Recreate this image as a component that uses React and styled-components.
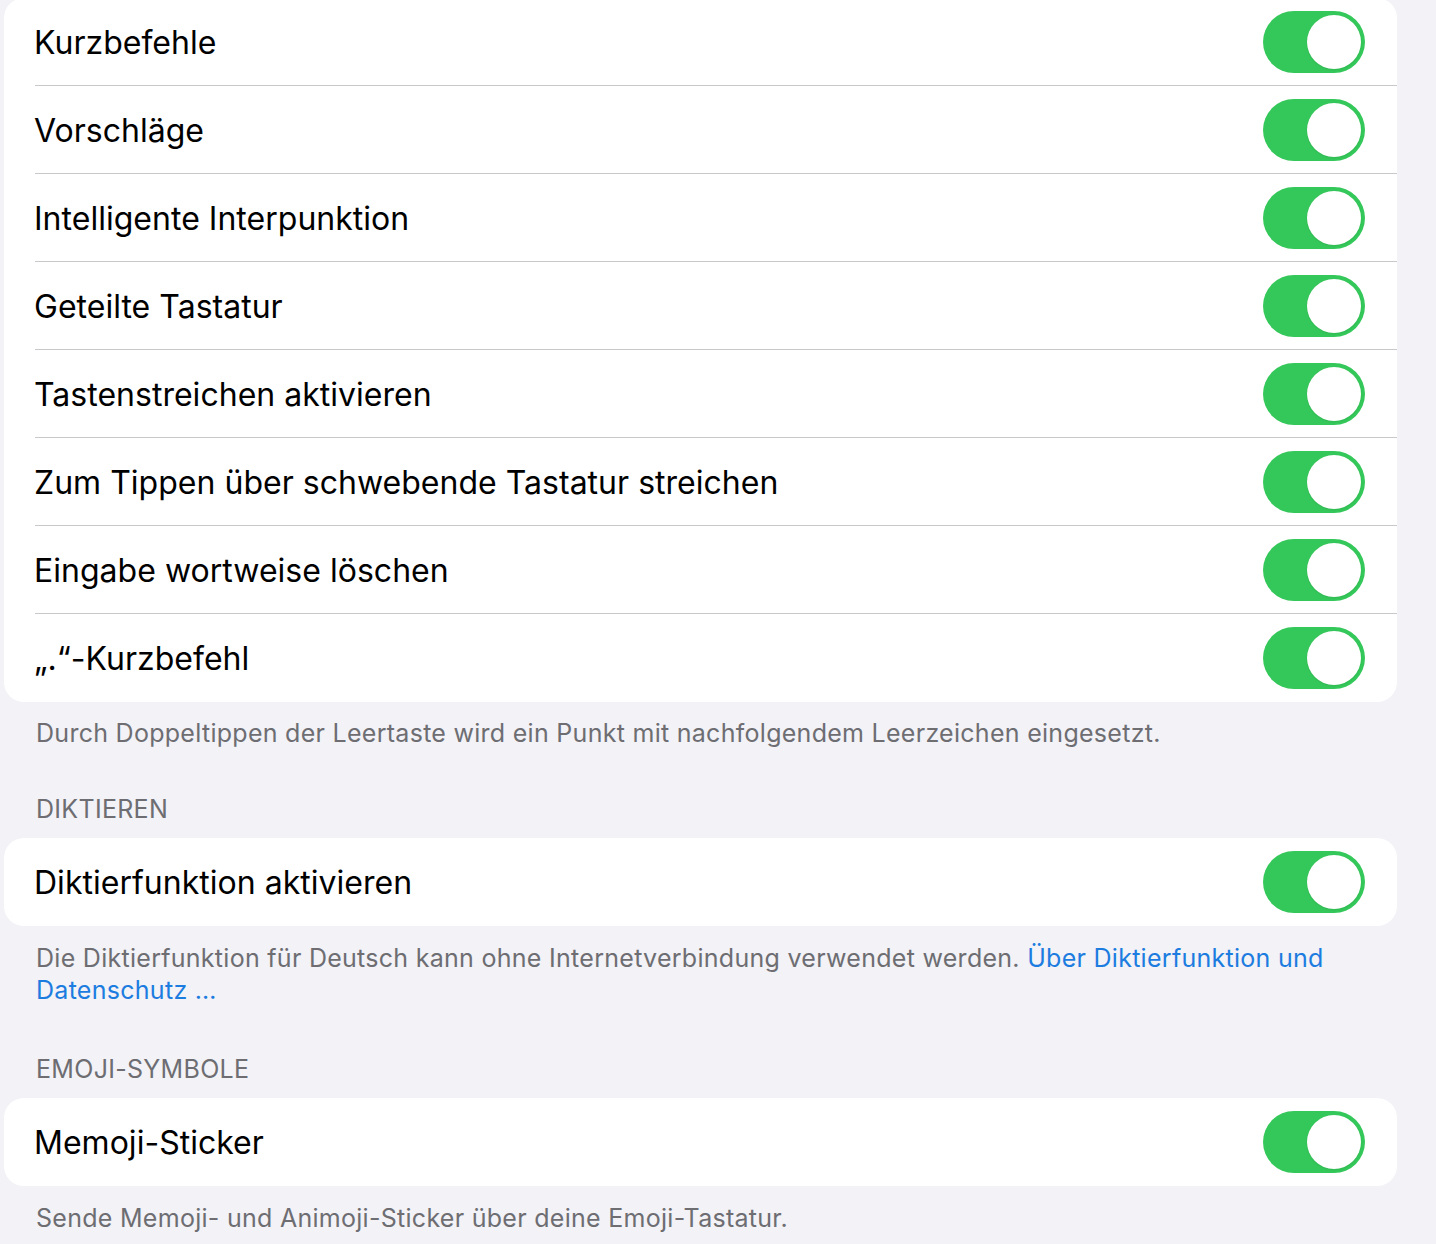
import React from 'react';
import styled, { createGlobalStyle } from 'styled-components';

const GlobalStyle = createGlobalStyle`
	html, body {
		margin: 0;
		padding: 0;
		background: #f2f2f7;
	}
	body {
		font-family: Inter, "Noto Sans", "Liberation Sans", sans-serif;
		-webkit-font-smoothing: antialiased;
	}
`

const Page = styled.div`
	width: 1436px;
	height: 1244px;
	overflow: hidden;
	padding: 0 39px 0 4px;
	box-sizing: border-box;
`

const Card = styled.div`
	background: #fff;
	border-radius: 20px;
	overflow: hidden;
	margin-top: ${props => props.offset || 0}px;
`

const Row = styled.div`
	display: flex;
	align-items: center;
	justify-content: space-between;
	height: 88px;
	padding: 0 32px 0 30px;
	position: relative;
	box-sizing: border-box;
	&:not(:last-child)::after {
		content: '';
		position: absolute;
		left: 31px;
		right: 0;
		bottom: 0;
		height: 1px;
		background: #c8c7cc;
	}
`

const Label = styled.span`
	font-size: 32px;
	color: #000;
	letter-spacing: 0.02px;
`

const Track = styled.div`
	width: 102px;
	height: 62px;
	border-radius: 31px;
	background: #34c759;
	display: flex;
	align-items: center;
	justify-content: flex-end;
	padding: 0 4px;
	box-sizing: border-box;
	flex-shrink: 0;
`

const Knob = styled.div`
	width: 54px;
	height: 54px;
	border-radius: 50%;
	background: #fff;
	box-shadow: 0 1px 2px rgba(0,0,0,0.08);
`

const Footer = styled.div`
	font-size: 25px;
	line-height: 32px;
	color: #6d6d72;
	padding: ${props => props.pad || '16px 32px 0 32px'};
	letter-spacing: 0.28px;
`

const Header = styled.div`
	font-size: 25px;
	line-height: 32px;
	color: #6d6d72;
	padding: 0 32px 13px 32px;
	letter-spacing: 0.3px;
`

const Link = styled.span`
	color: #1c7ce0;
`

const Toggle = () => (
	<Track>
		<Knob />
	</Track>
)

const topRows = [
	'Kurzbefehle',
	'Vorschläge',
	'Intelligente Interpunktion',
	'Geteilte Tastatur',
	'Tastenstreichen aktivieren',
	'Zum Tippen über schwebende Tastatur streichen',
	'Eingabe wortweise löschen',
	'„.“-Kurzbefehl',
]

export default function App() {
	return (
		<Page>
			<GlobalStyle />
			<Card offset={-2}>
				{topRows.map(label => (
					<Row key={label}>
						<Label>{label}</Label>
						<Toggle />
					</Row>
				))}
			</Card>
			<Footer pad="15px 32px 44px 32px">
				Durch Doppeltippen der Leertaste wird ein Punkt mit nachfolgendem Leerzeichen eingesetzt.
			</Footer>
			<Header>DIKTIEREN</Header>
			<Card>
				<Row>
					<Label>Diktierfunktion aktivieren</Label>
					<Toggle />
				</Row>
			</Card>
			<Footer pad="16px 32px 47px 32px">
				Die Diktierfunktion für Deutsch kann ohne Internetverbindung verwendet werden. <Link>Über Diktierfunktion und<br />Datenschutz …</Link>
			</Footer>
			<Header>EMOJI-SYMBOLE</Header>
			<Card>
				<Row>
					<Label>Memoji-Sticker</Label>
					<Toggle />
				</Row>
			</Card>
			<Footer>
				Sende Memoji- und Animoji-Sticker über deine Emoji-Tastatur.
			</Footer>
		</Page>
	)
}
